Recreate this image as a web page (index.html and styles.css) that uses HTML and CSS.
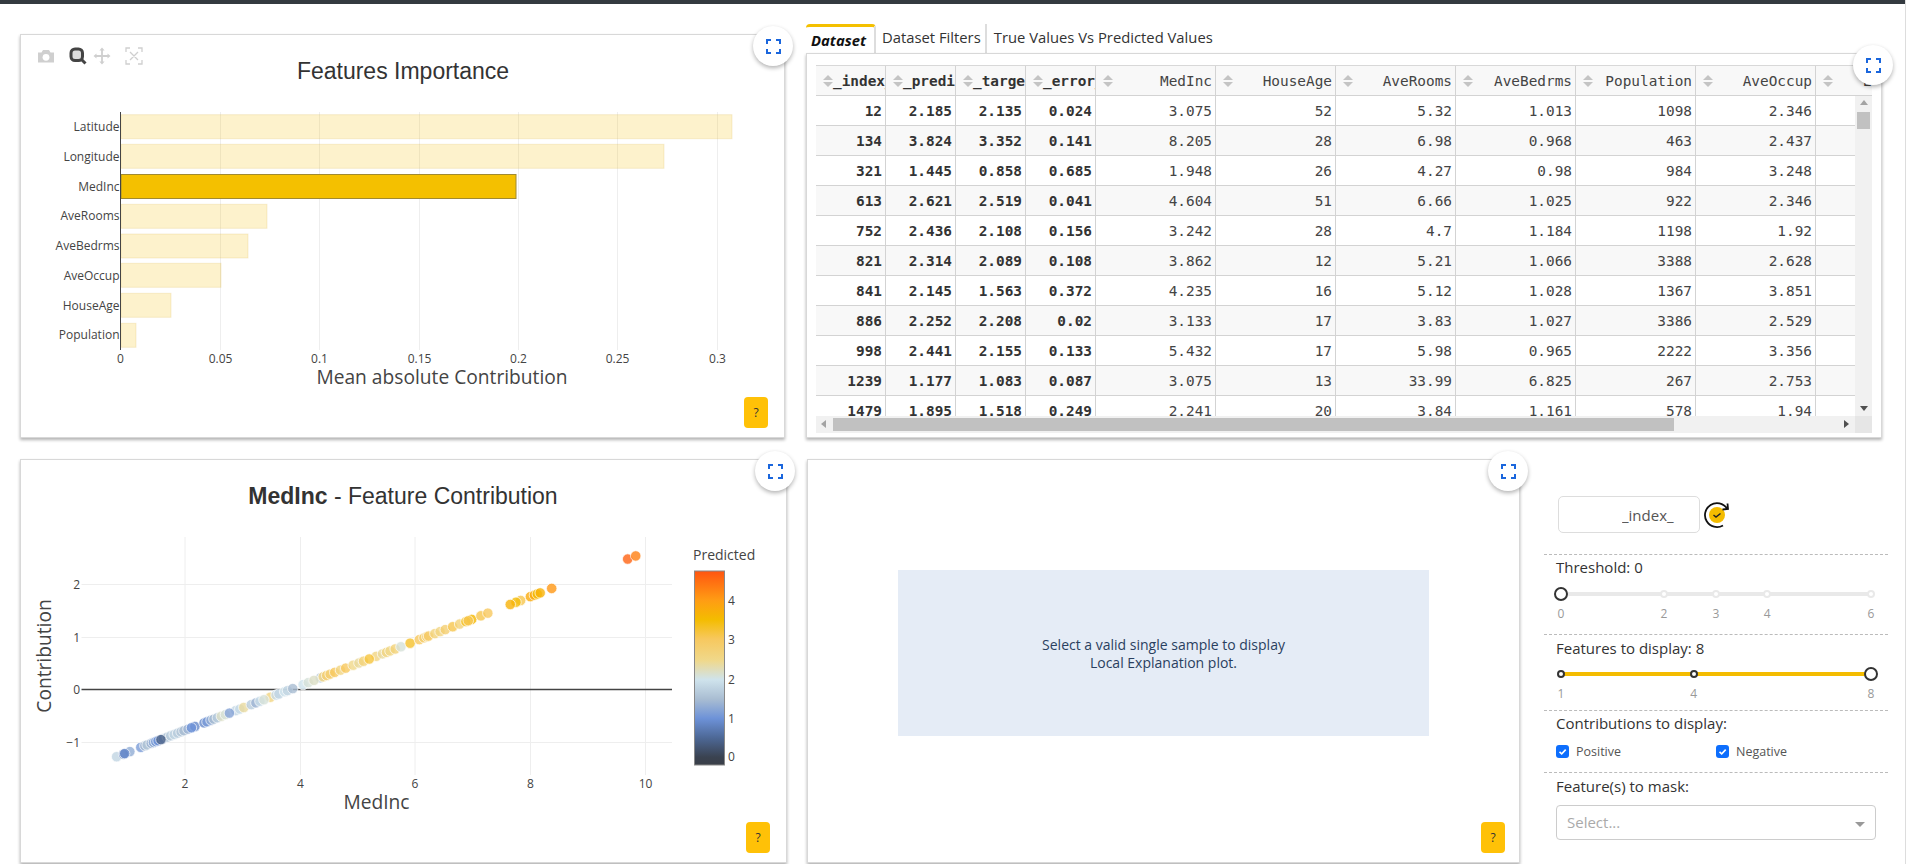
FILE: index.html
```html
<!DOCTYPE html>
<html lang="en">
<head>
  <meta charset="UTF-8">
  <title>Shapash Monitor</title>
  <link rel="stylesheet" href="styles.css">
</head>
<body>
  <div class="topbar"></div>

  <div class="row row-top">
    <section class="card card-features">
      <svg class="plot" viewBox="21 35 763 402">
        <!-- modebar -->
        <g class="mode-off">
          <path d="M38 52.5h3.5l1.5-2.5h6l1.5 2.5H54v10H38z"/>
          <circle class="lens" cx="46" cy="57.3" r="3.4"/>
          <path d="M102 47.5l2.6 3h-1.7v4.6h4.6v-1.7l3 2.6-3 2.6v-1.7h-4.6v4.6h1.7l-2.6 3-2.6-3h1.7v-4.6h-4.6v1.7l-3-2.6 3-2.6v1.7h4.6v-4.6h-1.7z"/>
          <path class="reset" d="M126 52v-4h4M138 48h4v4M142 60v4h-4M130 64h-4v-4M130 52l8 8M138 52l-8 8"/>
        </g>
        <g class="mode-on">
          <rect class="mode-glass" x="71" y="49" width="11.5" height="11.5" rx="4"/>
          <path d="M81 59l4.5 4.5"/>
        </g>

        <g class="grid">
          <path d="M220.5 112V350M319.5 112V350M419.5 112V350M518.5 112V350M617.5 112V350M717.5 112V350"/>
        </g>
        <g class="bars">
          <rect x="121" y="114.7" width="611" height="24"/>
          <rect x="121" y="144.3" width="543" height="24"/>
          <rect class="bar-on" x="121" y="174.5" width="395" height="24"/>
          <rect x="121" y="204.3" width="146" height="24"/>
          <rect x="121" y="234" width="127" height="24"/>
          <rect x="121" y="263.3" width="100" height="24"/>
          <rect x="121" y="293.3" width="50" height="24"/>
          <rect x="121" y="323.3" width="15" height="24"/>
        </g>
        <path class="axis" d="M120.5 112V350"/>

        <g class="tick tick-end">
          <text x="119.5" y="131">Latitude</text>
          <text x="119.5" y="161">Longitude</text>
          <text x="119.5" y="191">MedInc</text>
          <text x="119.5" y="220">AveRooms</text>
          <text x="119.5" y="250">AveBedrms</text>
          <text x="119.5" y="280">AveOccup</text>
          <text x="119.5" y="310">HouseAge</text>
          <text x="119.5" y="339">Population</text>
        </g>
        <g class="tick tick-mid">
          <text x="120.5" y="363">0</text>
          <text x="220.5" y="363">0.05</text>
          <text x="319.5" y="363">0.1</text>
          <text x="419.5" y="363">0.15</text>
          <text x="518.5" y="363">0.2</text>
          <text x="617.5" y="363">0.25</text>
          <text x="717.5" y="363">0.3</text>
        </g>
        <text class="plot-title" x="403" y="79">Features Importance</text>
        <text class="axis-title" x="442" y="384">Mean absolute Contribution</text>
      </svg>
      <button class="fs"><svg width="15" height="15" viewBox="0 0 15 15"><path d="M1 5V1h4M10 1h4v4M14 10v4h-4M5 14H1v-4"/></svg></button>
      <button class="help">?</button>
    </section>

    <div class="data-col">
      <div class="tabs">
        <div class="tab tab-active">Dataset</div>
        <div class="tab">Dataset Filters</div>
        <div class="tab">True Values Vs Predicted Values</div>
      </div>
      <section class="card card-table">
        <div class="dt">
          <table class="dt-table dt-head">
            <tr>
              <th class="th-left"><i class="sort"></i><span>_index_</span></th>
              <th class="th-left"><i class="sort"></i><span>_predicted_</span></th>
              <th class="th-left"><i class="sort"></i><span>_target_</span></th>
              <th class="th-left"><i class="sort"></i><span>_error_</span></th>
              <th><i class="sort"></i><span>MedInc</span></th>
              <th><i class="sort"></i><span>HouseAge</span></th>
              <th><i class="sort"></i><span>AveRooms</span></th>
              <th><i class="sort"></i><span>AveBedrms</span></th>
              <th><i class="sort"></i><span>Population</span></th>
              <th><i class="sort"></i><span>AveOccup</span></th>
              <th><i class="sort"></i><span>Latitude</span></th>
            </tr>
          </table>
          <div class="dt-mid">
            <div class="dt-rows">
              <table class="dt-table">
                <tr><td>12</td><td>2.185</td><td>2.135</td><td>0.024</td><td>3.075</td><td>52</td><td>5.32</td><td>1.013</td><td>1098</td><td>2.346</td><td></td></tr>
                <tr><td>134</td><td>3.824</td><td>3.352</td><td>0.141</td><td>8.205</td><td>28</td><td>6.98</td><td>0.968</td><td>463</td><td>2.437</td><td></td></tr>
                <tr><td>321</td><td>1.445</td><td>0.858</td><td>0.685</td><td>1.948</td><td>26</td><td>4.27</td><td>0.98</td><td>984</td><td>3.248</td><td></td></tr>
                <tr><td>613</td><td>2.621</td><td>2.519</td><td>0.041</td><td>4.604</td><td>51</td><td>6.66</td><td>1.025</td><td>922</td><td>2.346</td><td></td></tr>
                <tr><td>752</td><td>2.436</td><td>2.108</td><td>0.156</td><td>3.242</td><td>28</td><td>4.7</td><td>1.184</td><td>1198</td><td>1.92</td><td></td></tr>
                <tr><td>821</td><td>2.314</td><td>2.089</td><td>0.108</td><td>3.862</td><td>12</td><td>5.21</td><td>1.066</td><td>3388</td><td>2.628</td><td></td></tr>
                <tr><td>841</td><td>2.145</td><td>1.563</td><td>0.372</td><td>4.235</td><td>16</td><td>5.12</td><td>1.028</td><td>1367</td><td>3.851</td><td></td></tr>
                <tr><td>886</td><td>2.252</td><td>2.208</td><td>0.02</td><td>3.133</td><td>17</td><td>3.83</td><td>1.027</td><td>3386</td><td>2.529</td><td></td></tr>
                <tr><td>998</td><td>2.441</td><td>2.155</td><td>0.133</td><td>5.432</td><td>17</td><td>5.98</td><td>0.965</td><td>2222</td><td>3.356</td><td></td></tr>
                <tr><td>1239</td><td>1.177</td><td>1.083</td><td>0.087</td><td>3.075</td><td>13</td><td>33.99</td><td>6.825</td><td>267</td><td>2.753</td><td></td></tr>
                <tr><td>1479</td><td>1.895</td><td>1.518</td><td>0.249</td><td>2.241</td><td>20</td><td>3.84</td><td>1.161</td><td>578</td><td>1.94</td><td></td></tr>
              </table>
            </div>
            <div class="vbar">
              <i class="arrow arrow-up"></i>
              <div class="vbar-thumb"></div>
              <i class="arrow arrow-down"></i>
            </div>
          </div>
          <div class="dt-foot">
            <div class="hbar">
              <i class="arrow arrow-left"></i>
              <div class="hbar-thumb"></div>
              <i class="arrow arrow-right"></i>
            </div>
            <div class="corner"></div>
          </div>
        </div>
      </section>
      <button class="fs fs-table"><svg width="15" height="15" viewBox="0 0 15 15"><path d="M1 5V1h4M10 1h4v4M14 10v4h-4M5 14H1v-4"/></svg></button>
    </div>
  </div>

  <div class="row row-bottom">
    <section class="card card-scatter">
      <svg class="plot" viewBox="21 460 765 402">
        <defs>
          <linearGradient id="predicted" x1="0" y1="0" x2="0" y2="1">
            <stop offset="0" stop-color="#ff5510"/>
            <stop offset="0.15" stop-color="#ff9c14"/>
            <stop offset="0.25" stop-color="#f4bc00"/>
            <stop offset="0.35" stop-color="#f7c85e"/>
            <stop offset="0.46" stop-color="#f0d88a"/>
            <stop offset="0.56" stop-color="#cfe3ec"/>
            <stop offset="0.66" stop-color="#a9bdd2"/>
            <stop offset="0.76" stop-color="#6d92d8"/>
            <stop offset="0.86" stop-color="#4d6896"/>
            <stop offset="0.96" stop-color="#3a4250"/>
            <stop offset="1" stop-color="#3a3f48"/>
          </linearGradient>
        </defs>
        <g class="grid">
          <path d="M185 537V775M300.5 537V775M415 537V775M530.5 537V775M645.5 537V775"/>
          <path d="M81.5 584.5H672M81.5 637.5H672M81.5 742.5H672"/>
        </g>
        <path class="zero" d="M81.5 689.5H672"/>
        <g id="points"></g>

        <g class="tick tick-end">
          <text x="80" y="589">2</text>
          <text x="80" y="642">1</text>
          <text x="80" y="694">0</text>
          <text x="80" y="747">−1</text>
        </g>
        <g class="tick tick-mid">
          <text x="185" y="788">2</text>
          <text x="300.5" y="788">4</text>
          <text x="415" y="788">6</text>
          <text x="530.5" y="788">8</text>
          <text x="645.5" y="788">10</text>
        </g>

        <text class="cb-title" x="693" y="560">Predicted</text>
        <rect class="cb" x="694.5" y="571" width="30" height="194"/>
        <g class="tick">
          <text x="728" y="605">4</text>
          <text x="728" y="644">3</text>
          <text x="728" y="684">2</text>
          <text x="728" y="723">1</text>
          <text x="728" y="761">0</text>
        </g>

        <text class="plot-title" x="403" y="504"><tspan class="strong">MedInc</tspan> - Feature Contribution</text>
        <text class="axis-title" x="376.5" y="809">MedInc</text>
        <text class="axis-title" transform="translate(51 656) rotate(-90)">Contribution</text>
      </svg>
      <button class="fs"><svg width="15" height="15" viewBox="0 0 15 15"><path d="M1 5V1h4M10 1h4v4M14 10v4h-4M5 14H1v-4"/></svg></button>
      <button class="help">?</button>
    </section>

    <section class="card card-local">
      <div class="empty-plot">Select a valid single sample to display<br>Local Explanation plot.</div>
      <button class="fs"><svg width="15" height="15" viewBox="0 0 15 15"><path d="M1 5V1h4M10 1h4v4M14 10v4h-4M5 14H1v-4"/></svg></button>
      <button class="help">?</button>
    </section>

    <aside class="controls">
      <div class="index-row">
        <input class="index-input" type="text" value="_index_">
        <svg class="validate" width="30" height="30" viewBox="0 0 30 30">
          <circle class="validate-dot" cx="15" cy="15" r="8"/>
          <path class="validate-check" d="M11.5 15l2.5 2 4.5-3.5"/>
          <path class="validate-ring" d="M21 25.5A12 12 0 1 1 25 8.5M25.5 3.5L26 9l-5.5.5"/>
        </svg>
      </div>

      <div class="ctl ctl-threshold">
        <div class="ctl-label">Threshold: 0</div>
        <div class="slider">
          <div class="rail"></div>
          <i class="dot" style="left:33.2%"></i>
          <i class="dot" style="left:50%"></i>
          <i class="dot" style="left:66.5%"></i>
          <i class="dot" style="left:100%"></i>
          <i class="handle" style="left:0"></i>
        </div>
        <div class="marks">
          <span style="left:0">0</span>
          <span style="left:33.2%">2</span>
          <span style="left:50%">3</span>
          <span style="left:66.5%">4</span>
          <span style="left:100%">6</span>
        </div>
      </div>

      <div class="ctl ctl-features">
        <div class="ctl-label">Features to display: 8</div>
        <div class="slider">
          <div class="rail rail-on"></div>
          <i class="dot dot-on" style="left:0"></i>
          <i class="dot dot-on" style="left:42.8%"></i>
          <i class="handle" style="left:100%"></i>
        </div>
        <div class="marks">
          <span style="left:0">1</span>
          <span style="left:42.8%">4</span>
          <span style="left:100%">8</span>
        </div>
      </div>

      <div class="ctl ctl-contrib">
        <div class="ctl-label">Contributions to display:</div>
        <div class="checks">
          <label class="check"><span class="box"><svg width="13" height="13" viewBox="0 0 13 13"><path d="M3.5 6.8l2.2 2 4-4.2"/></svg></span>Positive</label>
          <label class="check"><span class="box"><svg width="13" height="13" viewBox="0 0 13 13"><path d="M3.5 6.8l2.2 2 4-4.2"/></svg></span>Negative</label>
        </div>
      </div>

      <div class="ctl ctl-mask">
        <div class="ctl-label">Feature(s) to mask:</div>
        <div class="select">
          <span>Select...</span>
          <i class="caret"></i>
        </div>
      </div>
    </aside>
  </div>

  <script src="script.js"></script>
</body>
</html>
```

FILE: styles.css
```css
* {
  box-sizing: border-box;
}
html, body {
  height: 864px;
  overflow: hidden;
}
body {
  margin: 0;
  background: #fff;
  border-right: 1px solid #ddd;
  font-family: "Open Sans", "Liberation Sans", sans-serif;
  color: #333;
}
.topbar {
  height: 4px;
  background: #343a40;
}
.row {
  display: flex;
  padding-left: 20px;
}
.row-top {
  padding-top: 20px;
}
.row-bottom {
  margin-top: 21px;
}
.card {
  position: relative;
  background: #fff;
  border: 1px solid #d8d8d8;
  box-shadow: 0 2px 3px rgba(0,0,0,0.3);
}
.card-features {
  width: 765px;
  height: 404px;
  margin-top: 10px;
}
.card-scatter {
  width: 767px;
  height: 404px;
}
.card-local {
  width: 713px;
  height: 404px;
  margin-left: 20px;
  display: flex;
  align-items: center;
  justify-content: center;
  padding-bottom: 16px;
}
.plot {
  display: block;
  width: 100%;
  height: 100%;
}

/* overlay buttons */
.fs {
  position: absolute;
  top: -9px;
  right: -9px;
  width: 40px;
  height: 40px;
  padding: 0;
  display: flex;
  align-items: center;
  justify-content: center;
  background: #fff;
  border: none;
  border-radius: 50%;
  box-shadow: 0 2px 4px rgba(0,0,0,0.3);
}
.fs path {
  fill: none;
  stroke: #1a66dd;
  stroke-width: 2;
}
.fs-table {
  top: 21px;
  right: -11px;
}
.help {
  position: absolute;
  right: 16px;
  bottom: 9px;
  width: 24px;
  height: 31px;
  padding: 0;
  font-family: "Open Sans", sans-serif;
  font-size: 12px;
  color: #333;
  background: #ffc107;
  border: none;
  border-radius: 4px;
}
.card-local .help {
  right: 14px;
}

/* chart parts */
.grid path {
  fill: none;
  stroke: #eee;
  stroke-width: 1;
}
.bars rect {
  fill: #f4c000;
  fill-opacity: 0.2;
  stroke: #d8b040;
  stroke-opacity: 0.2;
}
.bars .bar-on {
  fill-opacity: 1;
  stroke: #a08a30;
  stroke-opacity: 1;
}
.axis, .zero {
  fill: none;
  stroke: #444;
  stroke-width: 1;
}
.zero {
  stroke-width: 1.5;
}
.tick text {
  font-family: "Open Sans", sans-serif;
  font-size: 12px;
  fill: #444;
}
.tick-end text {
  text-anchor: end;
}
.tick-mid text {
  text-anchor: middle;
}
.plot-title {
  font-family: "Liberation Sans", Arial, sans-serif;
  font-size: 23px;
  fill: #333;
  text-anchor: middle;
}
.plot-title .strong {
  font-weight: bold;
}
.axis-title {
  font-family: "Open Sans", sans-serif;
  font-size: 19.2px;
  fill: #444;
  text-anchor: middle;
}
.cb-title {
  font-family: "Open Sans", sans-serif;
  font-size: 14px;
  fill: #444;
}
.cb {
  fill: url(#predicted);
  stroke: #888;
  stroke-width: 1;
}
#points circle {
  stroke: #fff;
  stroke-width: 0.7;
  fill-opacity: 0.8;
}
.mode-off {
  fill: #cfcfcf;
}
.mode-off .lens {
  fill: #fff;
  stroke: none;
}
.mode-off .reset {
  fill: none;
  stroke: #cfcfcf;
  stroke-width: 1.3;
}
.mode-on {
  fill: none;
  stroke: #444;
  stroke-width: 3;
}
.mode-glass {
  fill: #ddd;
}

/* tabs */
.data-col {
  position: relative;
  width: 1076px;
  margin-left: 21px;
}
.tabs {
  display: flex;
  height: 29px;
  font-size: 14.8px;
}
.tab {
  padding: 0 4px 0 6px;
  line-height: 27px;
  border-right: 2px solid #ddd;
  color: #333;
}
.tab:last-child {
  padding-left: 7px;
  border-right: none;
}
.tab-active {
  width: 70px;
  padding: 0 0 0 5px;
  line-height: 26px;
  font-weight: bold;
  font-style: italic;
  color: #111;
  border-top: 3px solid #f4c000;
  border-radius: 4px 4px 0 0;
}

/* data table */
.card-table {
  height: 385px;
  padding: 11px 9px 4px 9px;
}
.dt {
  width: 1056px;
  height: 368px;
  overflow: hidden;
  border-top: 1px solid #d8d8d8;
}
.dt-table {
  width: 1120px;
  table-layout: fixed;
  border-collapse: separate;
  border-spacing: 0;
  font-family: "DejaVu Sans Mono", "Liberation Mono", monospace;
  font-size: 14.4px;
  color: #444;
}
.dt-table th,
.dt-table td {
  height: 30px;
  width: 120px;
  padding: 0 3px 0 0;
  overflow: hidden;
  white-space: nowrap;
  text-align: right;
  font-weight: normal;
  border-right: 1px solid #d3d3d3;
  border-bottom: 1px solid #d3d3d3;
}
.dt-table th:nth-child(-n+4),
.dt-table td:nth-child(-n+4) {
  width: 70px;
  font-weight: bold;
  color: #333;
}
.dt-table th {
  position: relative;
  background: #f8f8f8;
}
.dt-table .th-left {
  padding: 0 0 0 17px;
  text-align: left;
}
.dt-table tr:nth-child(even) td {
  background: #f8f8f8;
}
.sort {
  position: absolute;
  left: 7px;
  top: 9px;
  width: 10px;
  height: 12px;
}
.sort::before,
.sort::after {
  content: "";
  position: absolute;
  left: 0;
  border-left: 5px solid transparent;
  border-right: 5px solid transparent;
}
.sort::before {
  top: 0;
  border-bottom: 5px solid #c4c4c4;
}
.sort::after {
  bottom: 0;
  border-top: 5px solid #c4c4c4;
}
.dt-mid {
  display: flex;
  height: 320px;
}
.dt-rows {
  width: 1039px;
  height: 320px;
  overflow: hidden;
}
.vbar {
  width: 17px;
  display: flex;
  flex-direction: column;
  align-items: center;
  background: #f1f1f1;
  position: relative;
}
.vbar-thumb {
  width: 13px;
  height: 17px;
  margin-top: 16px;
  background: #c1c1c1;
}
.dt-foot {
  display: flex;
  height: 17px;
}
.hbar {
  position: relative;
  width: 1039px;
  background: #f1f1f1;
  padding: 2px 0 2px 17px;
}
.hbar-thumb {
  width: 841px;
  height: 13px;
  background: #c1c1c1;
}
.corner {
  width: 17px;
  background: #e6e6e6;
}
.arrow {
  position: absolute;
  width: 0;
  height: 0;
  border: 4px solid transparent;
}
.arrow-up {
  top: 4px;
  border-top: none;
  border-bottom: 5px solid #a3a3a3;
}
.arrow-down {
  bottom: 5px;
  border-bottom: none;
  border-top: 5px solid #505050;
}
.arrow-left {
  left: 5px;
  top: 4px;
  border-left: none;
  border-right: 5px solid #a3a3a3;
}
.arrow-right {
  right: 6px;
  top: 4px;
  border-right: none;
  border-left: 5px solid #505050;
}

/* local plot */
.empty-plot {
  width: 531px;
  height: 166px;
  padding-top: 66px;
  text-align: center;
  font-size: 14px;
  line-height: 18px;
  color: #2a3f5f;
  background: #e5ecf6;
}

/* side controls */
.controls {
  width: 344px;
  margin-left: 24px;
  padding-top: 37px;
}
.index-row {
  display: flex;
  align-items: center;
  height: 37px;
  margin-bottom: 21px;
  padding-left: 14px;
}
.index-input {
  width: 142px;
  height: 37px;
  padding: 0 0 0 63px;
  font-family: "Open Sans", sans-serif;
  font-size: 15px;
  color: #555;
  border: 1px solid #ddd;
  border-radius: 5px;
  outline: none;
}
.validate {
  margin-left: 2px;
}
.validate-dot {
  fill: #f4bc00;
}
.validate-check {
  fill: none;
  stroke: #222;
  stroke-width: 1.5;
}
.validate-ring {
  fill: none;
  stroke: #111;
  stroke-width: 1.8;
}
.ctl {
  padding: 2px 12px 0 12px;
  border-top: 1px dashed #bbb;
}
.ctl-threshold {
  height: 80px;
}
.ctl-features {
  height: 76px;
  padding-top: 3px;
}
.ctl-contrib {
  height: 62px;
}
.ctl-mask {
  padding-top: 3px;
}
.ctl-label {
  height: 20px;
  font-size: 15px;
  line-height: 20px;
  color: #333;
}
.slider {
  position: relative;
  width: 310px;
  height: 14px;
  margin: 10px 0 0 5px;
}
.ctl-features .slider {
  margin-top: 9px;
}
.rail {
  position: absolute;
  left: 0;
  right: 0;
  top: 5px;
  height: 4px;
  background: #e9e9e9;
}
.rail-on {
  background: #f4bc00;
}
.dot, .handle {
  position: absolute;
  top: 50%;
  transform: translate(-50%, -50%);
  border-radius: 50%;
  background: #fff;
}
.dot {
  width: 8px;
  height: 8px;
  border: 2px solid #e9e9e9;
}
.dot-on {
  border-color: #333;
}
.handle {
  width: 14px;
  height: 14px;
  border: 2px solid #333;
}
.marks {
  position: relative;
  width: 310px;
  height: 16px;
  margin: 5px 0 0 5px;
  font-size: 12px;
  line-height: 16px;
  color: #999;
}
.marks span {
  position: absolute;
  transform: translateX(-50%);
}
.checks {
  display: flex;
  margin-top: 10px;
}
.check {
  display: flex;
  align-items: center;
  width: 160px;
  height: 17px;
  font-size: 12.5px;
  color: #555;
}
.box {
  width: 13px;
  height: 13px;
  margin-right: 7px;
  background: #0d6efd;
  border-radius: 3px;
}
.box svg {
  display: block;
}
.box path {
  fill: none;
  stroke: #fff;
  stroke-width: 1.6;
}
.select {
  position: relative;
  width: 320px;
  height: 35px;
  margin-top: 9px;
  padding-left: 10px;
  font-size: 15px;
  line-height: 33px;
  color: #aaa;
  border: 1px solid #ccc;
  border-radius: 4px;
}
.caret {
  position: absolute;
  right: 10px;
  top: 16px;
  border-left: 5px solid transparent;
  border-right: 5px solid transparent;
  border-top: 5px solid #999;
}
```

FILE: script.js
```javascript
// [MedInc, predicted] for the sampled rows
const samples = [
  [0.81, 1.8], [1.04, 1.3], [0.93, 0.8], [0.95, 0.9], [1.23, 1.1], [1.3, 1.5], [1.34, 1.6],
  [1.41, 1.4], [1.45, 1.3], [1.49, 1.1], [1.53, 1.0], [1.62, 1.3], [1.69, 1.6], [1.75, 1.7],
  [1.81, 1.8], [1.87, 1.7], [1.58, 0.4], [1.93, 1.6], [1.98, 1.5], [2.05, 1.4], [2.17, 0.9],
  [2.11, 1.0], [2.33, 0.9], [2.38, 1.1], [2.45, 1.3], [2.5, 1.5], [2.56, 1.7], [2.63, 2.2],
  [2.7, 2.1], [2.88, 1.8], [2.77, 1.2], [2.95, 1.9], [3.02, 2.4], [3.15, 1.7], [3.23, 1.4],
  [3.3, 1.9], [3.48, 2.6], [3.37, 2.1], [3.58, 1.9], [3.63, 1.8], [3.73, 2.0], [3.78, 1.8],
  [3.87, 1.5], [4.05, 2.0], [4.14, 2.1], [4.35, 1.7], [4.24, 2.2], [4.4, 2.6], [4.46, 2.8],
  [4.52, 2.8], [4.6, 3.0], [4.7, 2.6], [4.79, 3.0], [4.92, 2.5], [5.02, 2.4], [5.1, 2.7],
  [5.32, 2.6], [5.2, 3.2], [5.43, 2.4], [5.5, 2.6], [5.56, 2.5], [5.65, 2.7], [5.75, 2.1],
  [5.91, 3.3], [6.07, 3.0], [6.15, 2.8], [6.2, 2.7], [6.23, 2.9], [6.34, 2.7], [6.43, 2.6],
  [6.52, 2.8], [6.65, 3.1], [6.77, 2.7], [6.98, 3.6], [6.88, 3.4], [6.92, 3.1], [7.14, 3.1],
  [7.26, 3.0], [7.83, 3.1], [7.75, 3.5], [7.65, 3.7], [8.0, 3.8], [8.07, 3.8], [8.12, 3.5],
  [8.17, 3.7], [8.37, 4.05], [9.69, 4.6], [9.83, 4.3]
];

// same stops as the colorbar
const stops = [
  [0, [58, 66, 80]], [0.5, [77, 104, 150]], [1, [109, 146, 216]], [1.5, [169, 189, 210]],
  [2, [207, 227, 236]], [2.5, [240, 216, 138]], [3, [247, 200, 94]], [3.55, [244, 188, 0]],
  [4, [255, 156, 20]], [4.75, [255, 85, 16]]
];

function colorFor(v) {
  for (let i = 1; i < stops.length; i++) {
    if (v <= stops[i][0]) {
      const a = stops[i - 1], b = stops[i];
      const t = (v - a[0]) / (b[0] - a[0]);
      const c = a[1].map((n, k) => Math.round(n + (b[1][k] - n) * t));
      return "rgb(" + c.join(",") + ")";
    }
  }
  return "rgb(255,85,16)";
}

const points = document.getElementById("points");
samples.forEach(function (s) {
  const dot = document.createElementNS("http://www.w3.org/2000/svg", "circle");
  const contribution = 0.4224 * (s[0] - 3.83);
  dot.setAttribute("cx", 70 + s[0] * 57.55);
  dot.setAttribute("cy", 689.5 - contribution * 52.7);
  dot.setAttribute("r", 5.2);
  dot.setAttribute("fill", colorFor(s[1]));
  points.appendChild(dot);
});
```
